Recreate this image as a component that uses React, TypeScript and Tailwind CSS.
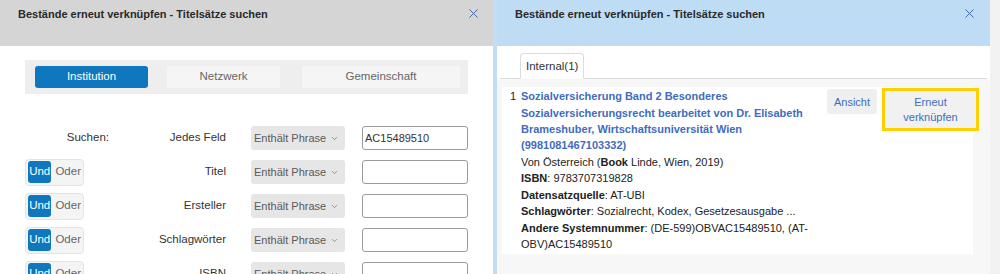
import { X, ChevronDown } from "lucide-react";

const rows = ["Titel", "Ersteller", "Schlagwörter", "ISBN"];

function SelectBox() {
  return (
    <div className="flex h-6 w-[94px] items-center justify-between whitespace-nowrap rounded-[3px] bg-[#e6e6e6] pl-[3px] pr-[6px] text-[11px] text-[#5a5a5a]">
      <span>Enthält Phrase</span>
      <ChevronDown size={9} strokeWidth={2} className="text-[#777]" />
    </div>
  );
}

function Toggle() {
  return (
    <div className="flex h-[27px] w-[59px] items-center gap-[4px] rounded-[4px] border border-[#e4e4e4] bg-[#f4f4f4] px-[2px]">
      <span className="flex h-[22px] w-[25px] items-center justify-center rounded-[3px] bg-[#0f77bd] text-[11.5px] text-white">
        Und
      </span>
      <span className="text-[11.5px] text-[#666]">Oder</span>
    </div>
  );
}

function Header({ bg, pr }: { bg: string; pr: string }) {
  return (
    <div className={`flex h-[46px] shrink-0 items-start justify-between ${bg} pt-[6px] pl-[18px] ${pr}`}>
      <span className="text-[11px] font-bold text-[#2a2a2a]">
        Bestände erneut verknüpfen - Titelsätze suchen
      </span>
      <X size={15} strokeWidth={1.5} className="text-[#3b67a8]" />
    </div>
  );
}

export default function App() {
  return (
    <div
      className="flex h-[274px] w-[1000px] overflow-hidden bg-[#f2f2f2]"
      style={{ fontFamily: '"Liberation Sans", Arial, sans-serif' }}
    >
      {/* left panel */}
      <div className="flex w-[493px] shrink-0 flex-col bg-white">
        <Header bg="bg-[#d5d5d5]" pr="pr-[12px]" />
        <div className="ml-[25px] mt-[14px] flex h-[34px] w-[443px] shrink-0 items-center gap-[18px] bg-[#eeeeee] pl-[10px] pr-[8px] text-[11.5px]">
          <div className="flex h-[22px] w-[113px] items-center justify-center rounded-[3px] bg-[#0f77bd] text-white">
            Institution
          </div>
          <div className="ml-[1px] flex h-[22px] w-[113px] items-center justify-center bg-[#f5f5f5] text-[#666]">
            Netzwerk
          </div>
          <div className="ml-[4px] flex h-[22px] flex-1 items-center justify-center bg-[#f5f5f5] text-[#666]">
            Gemeinschaft
          </div>
        </div>

        <div className="mt-[32px] flex flex-col gap-[10px] pl-[25px] text-[11.5px] text-[#333]">
          <div className="flex h-6 shrink-0 items-center">
            <div className="w-[84px] text-right">Suchen:</div>
            <div className="w-[117px] text-right">Jedes Feld</div>
            <div className="ml-[25px]">
              <SelectBox />
            </div>
            <div className="ml-[17px] flex h-6 w-[106px] items-center rounded-[3px] border border-[#9a9a9a] px-[2px] text-[11px] text-[#333]">
              AC15489510
            </div>
          </div>
          {rows.map((r) => (
            <div key={r} className="flex h-6 shrink-0 items-center">
              <div className="w-[84px]">
                <Toggle />
              </div>
              <div className="w-[117px] text-right">{r}</div>
              <div className="ml-[25px]">
                <SelectBox />
              </div>
              <div className="ml-[17px] h-6 w-[106px] rounded-[3px] border border-[#9a9a9a]" />
            </div>
          ))}
        </div>
      </div>

      {/* right panel */}
      <div className="flex w-[497px] shrink-0 flex-col border-l-4 border-[#c3ddf4] bg-white">
        <Header bg="bg-[#bedcf3]" pr="pr-[13px]" />
        <div className="mx-[3px] mt-[7px] flex border-b border-[#dcdcdc] pl-[20px]">
          <div className="-mb-px rounded-t-[4px] border border-b-white border-[#dcdcdc] bg-white px-[5px] pt-[4px] pb-[3px] text-[11.5px] text-[#333]">
            Internal(1)
          </div>
        </div>
        <div className="flex-1 bg-[#f7f7f7] px-[5px] pt-[8px]">
          <div className="flex h-[167px] w-[471px] whitespace-nowrap bg-white pl-[8px] pt-[1px] text-[11px] leading-[16.4px] text-[#222]">
            <div className="w-[11px]">1</div>
            <div className="flex-1">
              <div className="font-bold text-[#3f6cbf]">
                Sozialversicherung Band 2 Besonderes
                <br />
                Sozialversicherungsrecht bearbeitet von Dr. Elisabeth
                <br />
                Brameshuber, Wirtschaftsuniversität Wien
                <br />
                (9981081467103332)
              </div>
              <div>
                Von Österreich (<b>Book</b> Linde, Wien, 2019)
              </div>
              <div>
                <b>ISBN</b>: 9783707319828
              </div>
              <div>
                <b>Datensatzquelle</b>: AT-UBI
              </div>
              <div>
                <b>Schlagwörter</b>: Sozialrecht, Kodex, Gesetzesausgabe ...
              </div>
              <div>
                <b>Andere Systemnummer</b>: (DE-599)OBVAC15489510, (AT-
                <br />
                OBV)AC15489510
              </div>
            </div>
            <div className="-mr-[6px] flex items-start gap-[5px]">
              <div className="mt-[1px] flex h-[25px] w-[50px] items-center justify-center rounded-[3px] bg-[#efefef] text-[#3f6cbf]">
                Ansicht
              </div>
              <div className="flex h-[43px] w-[97px] items-center justify-center border-[3px] border-[#ffd000] bg-[#f1f1f1] text-center leading-[15px] text-[#3f6cbf]">
                Erneut
                <br />
                verknüpfen
              </div>
            </div>
          </div>
        </div>
      </div>
    </div>
  );
}
